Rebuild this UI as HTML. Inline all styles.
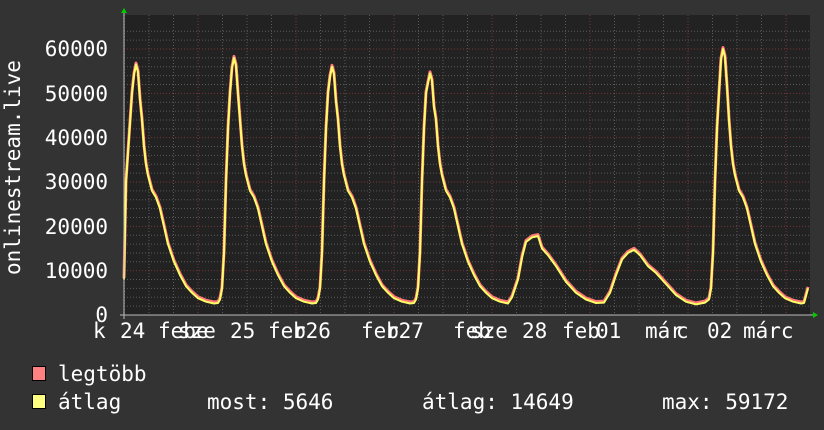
<!DOCTYPE html>
<html><head><meta charset="utf-8"><style>
html,body{margin:0;padding:0;background:#333;}
svg{display:block}
text{font-family:"DejaVu Sans Mono","Liberation Mono",monospace;font-size:21px;fill:#fff}
</style></head><body>
<svg id="s" width="824" height="430" xmlns="http://www.w3.org/2000/svg">
<rect width="824" height="430" fill="#333"/>
<rect x="124" y="15" width="686" height="300" fill="#222"/>
<g id="grid"></g>
<path id="red" fill="none" stroke="#ff7777" stroke-width="3" stroke-linejoin="round"/>
<path id="yel" fill="none" stroke="#ffff66" stroke-width="2" stroke-linejoin="round"/>
<line x1="120" y1="315" x2="816" y2="315" stroke="#bbb" stroke-width="1"/>
<line x1="124" y1="12" x2="124" y2="319" stroke="#bbb" stroke-width="1"/>
<polygon points="121,13 127,13 124,8" fill="#0c0"/>
<polygon points="813,312 813,318 818,315" fill="#0c0"/>
<g text-anchor="end">
<text x="108" y="56">60000</text>
<text x="108" y="101">50000</text>
<text x="108" y="145">40000</text>
<text x="108" y="189">30000</text>
<text x="108" y="234">20000</text>
<text x="108" y="278">10000</text>
<text x="108" y="322">0</text>
</g>
<text transform="translate(20,275) rotate(-90)">onlinestream.live</text>
<text x="93" y="338">k</text>
<text x="120" y="338">24</text>
<text x="158" y="338">febe</text>
<text x="178" y="338">sze</text>
<text x="230" y="338">25</text>
<text x="268" y="338">feb</text>
<text x="293" y="338">r26</text>
<text x="361" y="338">feb</text>
<text x="386" y="338">r27</text>
<text x="453" y="338">feb</text>
<text x="470" y="338">sze</text>
<text x="522" y="338">28</text>
<text x="562" y="338">feb</text>
<text x="596" y="338">01</text>
<text x="645" y="338">már</text>
<text x="676" y="338">c</text>
<text x="707" y="338">02</text>
<text x="743" y="338">márc</text>
<rect x="32.5" y="366.5" width="13" height="14" fill="#ff8080" stroke="#000"/>
<rect x="32.5" y="394.5" width="13" height="14" fill="#ffff80" stroke="#000"/>
<text x="58" y="381">legtöbb</text>
<text x="58" y="409">átlag</text>
<text x="207" y="409">most: 5646</text>
<text x="422" y="409">átlag: 14649</text>
<text x="662" y="409">max: 59172</text>
</svg>
<script>
var NS="http://www.w3.org/2000/svg",g=document.getElementById('grid');
function ln(x1,y1,x2,y2,c){var l=document.createElementNS(NS,'line');l.setAttribute('x1',x1);l.setAttribute('y1',y1);l.setAttribute('x2',x2);l.setAttribute('y2',y2);l.setAttribute('stroke',c);l.setAttribute('stroke-dasharray','1,2');g.appendChild(l);}
function Y(v){return 315-v*0.004433;}
for(var v=2000;v<=64000;v+=2000){var y=Y(v);if(y<15)break;ln(124,y,810,y,v%10000==0?'#7a3535':'#5a5a5a');}
for(var x=198-98;x<810;x+=24.5){if(x<=124)continue;var d=Math.abs(((x-198)/98)-Math.round((x-198)/98))<0.01;ln(x,15,x,315,d?'#7a3535':'#5a5a5a');}
var pts=[];
function big(px,P,fromDx,toDx){var t=[[-16,2900],[-14,3500],[-12,6000],[-10,14000],[-8,30000],[-6,42000],[-4,50000],[-2,0.96*P],[0,P],[2,0.97*P],[4,0.86*P],[6,44000],[8,38000],[10,34000],[12,31500],[16,28000],[20,26500],[24,24000],[28,20000],[32,16000],[38,12000],[44,9000],[50,6500],[56,5000],[62,3800],[70,3000],[78,2600],[82,2700]];
t.forEach(function(p){if(p[0]>=fromDx&&p[0]<=toDx)pts.push([px+p[0],p[1]]);});}
pts.push([124,8000]);pts.push([126,30000]);
big(136,56500,-4,82);big(234,58000,-14,82);big(332,56000,-14,82);big(430,54500,-14,78);
[[512,4000],[518,8000],[522,13000],[526,16500],[532,17500],[538,17800],[542,15000],[548,13500],[556,11000],[566,7500],[576,5000],[586,3500],[596,2700],[604,2800],[610,5000],[616,9000],[622,12500],[628,14000],[634,14700],[640,13500],[648,11000],[656,9500],[666,7000],[676,4500],[686,3000],[696,2400],[705,2800]].forEach(function(p){pts.push(p)});
big(723,60000,-14,78);pts.push([804,2700]);pts.push([808,6000]);
var d='';pts.forEach(function(p,i){d+=(i?'L':'M')+p[0]+','+Y(p[1]).toFixed(1);});
document.getElementById('yel').setAttribute('d',d);
var d2='';pts.forEach(function(p,i){d2+=(i?'L':'M')+p[0]+','+(Y(p[1])-1.5).toFixed(1);});
document.getElementById('red').setAttribute('d',d2);
</script>
</body></html>
